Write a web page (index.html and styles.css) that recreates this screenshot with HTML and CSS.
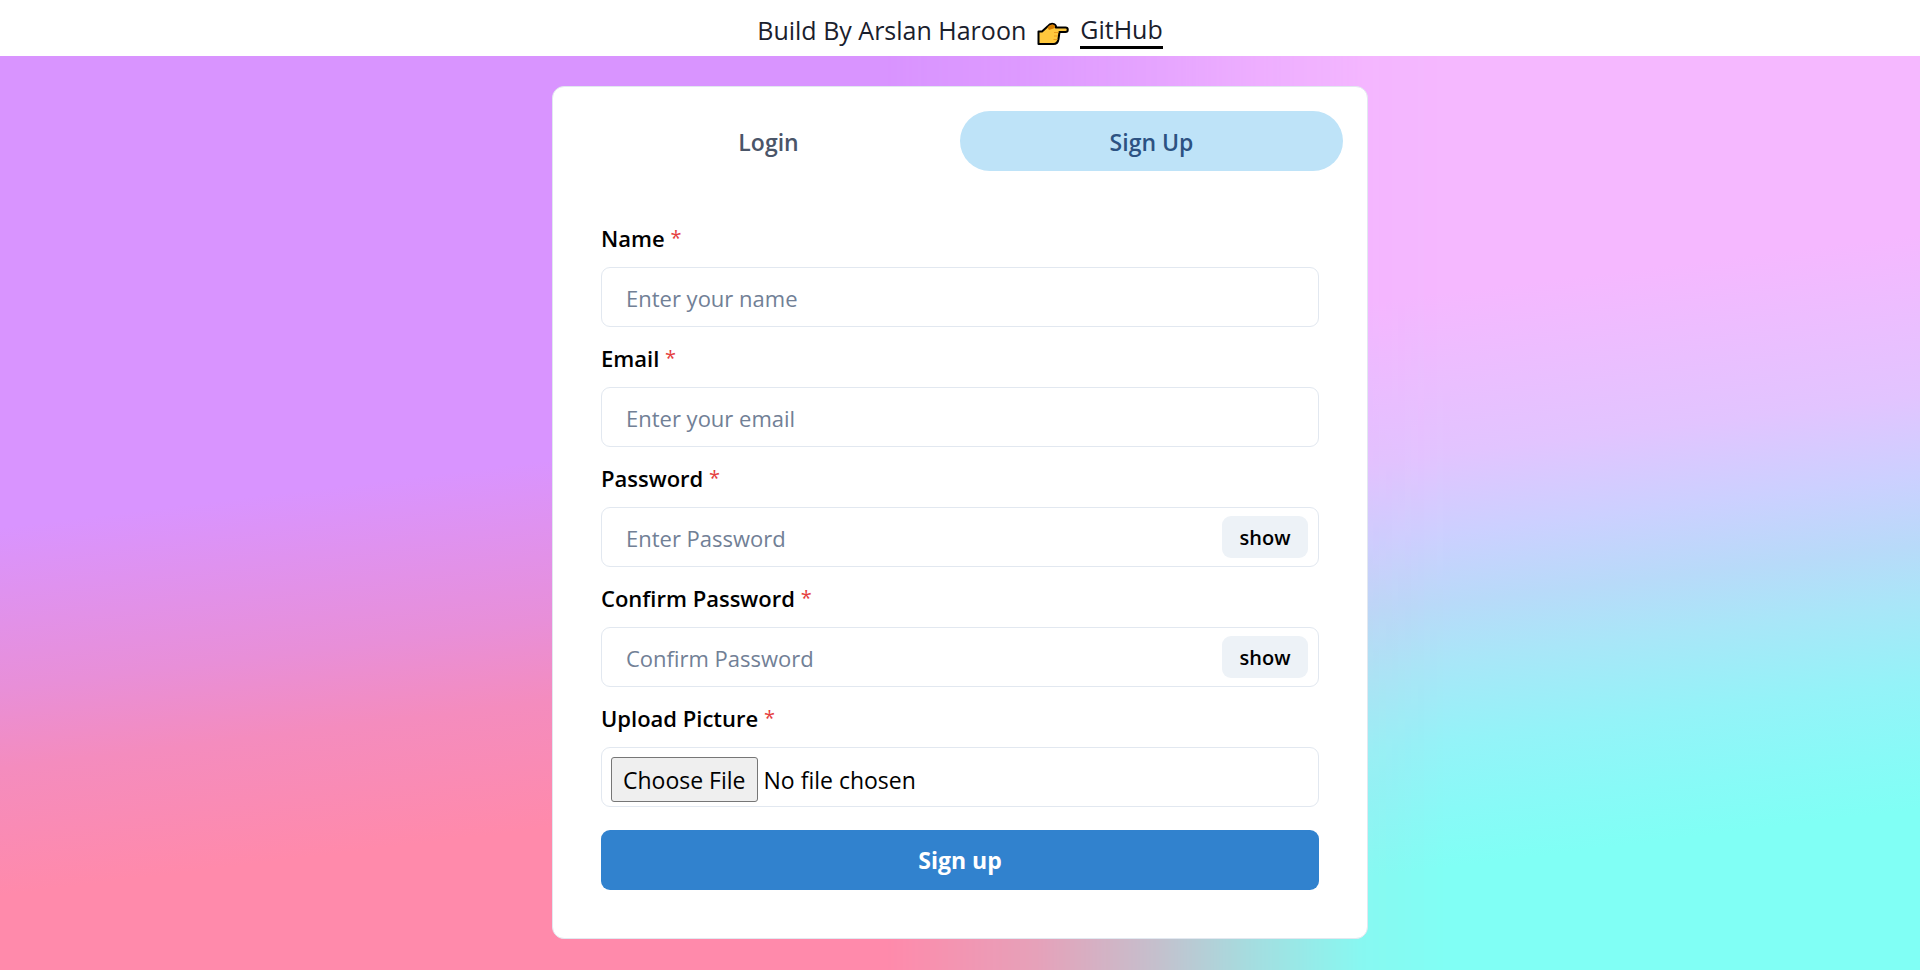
FILE: index.html
```html
<!DOCTYPE html>
<html lang="en">
<head>
<meta charset="utf-8">
<meta name="viewport" content="width=device-width, initial-scale=1">
<title>Sign Up</title>
<link rel="stylesheet" href="styles.css">
</head>
<body>
<header class="banner">
  <span>Build By Arslan Haroon</span>
  <svg class="hand" viewBox="0 0 32 24" aria-hidden="true">
    <path d="M1.500 9.500H5L10.500 4.500C12.500 2 15 1.300 17 2.200C19 3.200 19.300 4.500 18.700 5.500H28.500C31.500 5.500 31.500 10 28.500 10H22.500L21.500 17C21 20.500 19.500 22 16.500 22H1.500Z" fill="#ffc83d" stroke="#000" stroke-width="2" stroke-linejoin="round"/>
    <path d="M10.500 5.500C12.500 3 15 2 16.800 3C18.500 4 18.200 5.500 16.500 6.500L12 8Z" fill="#d67d00"/>
    <path d="M17 10.500H21.500M17 14H21M16.500 17.500H20.500" stroke="#e89a1c" stroke-width="1" fill="none"/>
  </svg>
  <a class="banner-link" href="#">GitHub</a>
</header>
<main class="stage">
  <section class="card">
    <div class="tabs" role="tablist">
      <button class="tab" type="button" role="tab" aria-selected="false">Login</button>
      <button class="tab tab-active" type="button" role="tab" aria-selected="true">Sign Up</button>
    </div>
    <form class="form">
      <div class="field">
        <label class="label" for="name">Name <span class="star">*</span></label>
        <input class="input" id="name" type="text" placeholder="Enter your name">
      </div>
      <div class="field">
        <label class="label" for="email">Email <span class="star">*</span></label>
        <input class="input" id="email" type="email" placeholder="Enter your email">
      </div>
      <div class="field">
        <label class="label" for="password">Password <span class="star">*</span></label>
        <div class="input input-group">
          <input class="bare" id="password" type="password" placeholder="Enter Password">
          <button class="show" type="button">show</button>
        </div>
      </div>
      <div class="field">
        <label class="label" for="confirm">Confirm Password <span class="star">*</span></label>
        <div class="input input-group">
          <input class="bare" id="confirm" type="password" placeholder="Confirm Password">
          <button class="show" type="button">show</button>
        </div>
      </div>
      <div class="field">
        <label class="label" for="picture">Upload Picture <span class="star">*</span></label>
        <input class="input file" id="picture" type="file" accept="image/*">
      </div>
      <button class="submit" type="submit">Sign up</button>
    </form>
  </section>
</main>
</body>
</html>
```
FILE: styles.css
```css
* {
  box-sizing: border-box;
}

body {
  margin: 0;
  min-height: 100vh;
  display: flex;
  flex-direction: column;
  font-family: "Open Sans", "Noto Sans", sans-serif;
  font-size: 22px;
  line-height: 36px;
  color: #000;
}

button,
input {
  font: inherit;
  color: inherit;
}

.banner {
  display: flex;
  justify-content: center;
  align-items: center;
  gap: 11px;
  height: 56px;
  padding-top: 4px;
  background: #fff;
  color: #1a202c;
  font-size: 25px;
}

.hand {
  width: 32px;
  height: 24px;
  margin-top: 8px;
}

.banner-link {
  color: inherit;
  text-decoration: none;
  line-height: 34px;
  border-bottom: 3px solid #000;
}

.stage {
  position: relative;
  flex: 1;
  padding: 30px 16px;
  background: linear-gradient(173deg, #d994ff 41%, #e88fd8 55%, #f48cbe 62%, #ff8aab 73%);
}

.stage::before {
  content: "";
  position: absolute;
  inset: 0;
  background: linear-gradient(173deg, #f5b8ff 36%, #e2c4ff 50%, #ccd0ff 57%, #b8daf9 63%, #a9e6f8 68%, #94f3f8 75%, #88faf7 81%, #80fff5 86%);
  mask-image: linear-gradient(90deg, transparent 46%, rgb(0 0 0 / 20%) 54%, rgb(0 0 0 / 45%) 60%, rgb(0 0 0 / 70%) 65%, rgb(0 0 0 / 94%) 71%, #000 76%);
}

.card {
  position: relative;
  max-width: 816px;
  margin: 0 auto;
  padding: 24px;
  background: #fff;
  border: 1px solid #e2e8f0;
  border-radius: 12px;
}

.tabs {
  display: grid;
  grid-template-columns: 1fr 1fr;
}

.tab {
  height: 60px;
  padding: 2px 24px 0;
  border: 0;
  border-radius: 30px;
  background: transparent;
  color: #4a5568;
  font-size: 23px;
  font-weight: 600;
}

.tab-active {
  background: #bee3f8;
  color: #2c5282;
}

.form {
  display: flex;
  flex-direction: column;
  gap: 12px;
  padding: 48px 24px 24px;
}

.label {
  display: block;
  margin-bottom: 10px;
  line-height: 38px;
  font-weight: 600;
}

.star {
  color: #e53e3e;
  font-size: 20px;
  font-weight: 400;
  line-height: 1;
  vertical-align: 2px;
}

.input {
  display: block;
  width: 100%;
  height: 60px;
  padding: 2px 24px 0;
  border: 1px solid #e2e8f0;
  border-radius: 9px;
  background: #fff;
}

.input::placeholder,
.bare::placeholder {
  color: #718096;
  opacity: 1;
}

.input-group {
  display: flex;
  align-items: center;
  padding: 0 10px 0 24px;
}

.bare {
  flex: 1;
  min-width: 0;
  padding: 2px 0 0;
  border: 0;
  outline: 0;
  background: transparent;
}

.show {
  width: 86px;
  height: 42px;
  padding: 2px 0 0;
  border: 0;
  border-radius: 9px;
  background: #edf2f7;
  font-size: 20px;
  font-weight: 600;
}

.file {
  padding: 9px;
  font-size: 23px;
}

.file::file-selector-button {
  height: 45px;
  margin: 0 6px 0 0;
  padding: 0 11px;
  border: 1px solid #767676;
  border-radius: 3px;
  background: #efefef;
  font: inherit;
}

.submit {
  height: 60px;
  margin-top: 11px;
  border: 0;
  border-radius: 9px;
  background: #3182ce;
  color: #fff;
  font-size: 23px;
  font-weight: 700;
}
```
